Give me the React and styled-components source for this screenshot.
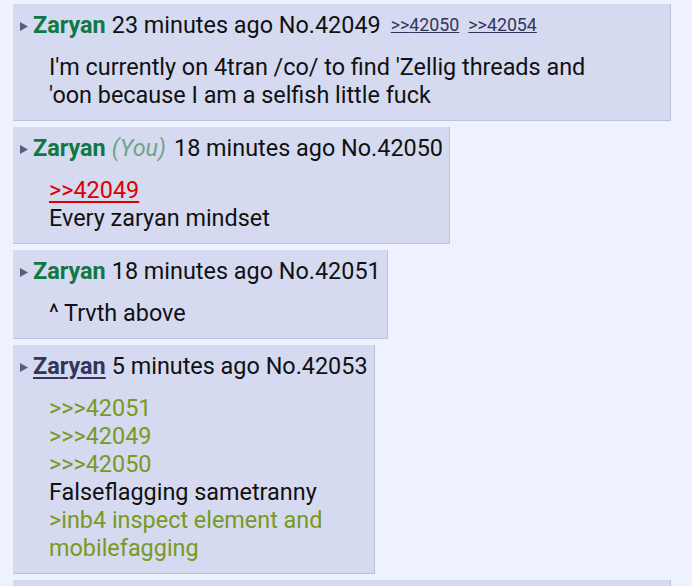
import React from 'react';
import styled, { createGlobalStyle } from 'styled-components';

const GlobalStyle = createGlobalStyle`
  html, body {
    margin: 0;
    padding: 0;
    background: #eef2ff;
  }
  body {
    font-family: Roboto, "Liberation Sans", sans-serif;
    color: #111;
  }
`;

const Thread = styled.div`
  display: flex;
  flex-direction: column;
  align-items: flex-start;
  padding: 4px 21px 0 13px;
  height: 586px;
  box-sizing: border-box;
  overflow: hidden;
`;

const Post = styled.div`
  display: table;
  box-sizing: border-box;
  max-width: 100%;
  width: ${p => (p.$loading ? '100%' : 'auto')};
  min-height: ${p => (p.$loading ? '60px' : '0')};
  flex-shrink: 0;
  background: #d6daf0;
  border-right: 1px solid #b7c5d9;
  border-bottom: 1px solid #b7c5d9;
  padding: 7px 5px 0 7px;
  margin-bottom: 6px;
`;

const PostInfo = styled.div`
  display: flex;
  align-items: center;
  white-space: nowrap;
  font-size: 23.4px;
  line-height: 28px;
`;

const MenuArrow = styled.svg`
  width: 8px;
  height: 9px;
  margin: 3px 5px 0 0;
  flex-shrink: 0;
`;

const Name = styled.span`
  font-weight: 700;
  color: ${p => (p.$link ? '#34345c' : '#117743')};
  text-decoration: ${p => (p.$link ? 'underline' : 'none')};
  text-underline-offset: 3px;
  margin-right: 6px;
`;

const You = styled.span`
  font-style: italic;
  color: #6ea588;
  margin-right: 8px;
`;

const Meta = styled.span`
  margin-right: 1px;
`;

const Backlink = styled.a`
  font-size: 17.8px;
  color: #34345c;
  text-decoration: underline;
  margin-left: 9px;
  cursor: pointer;
`;

const Body = styled.blockquote`
  margin: 14px 40px 11px 29px;
  font-size: 23.4px;
  line-height: 28px;
`;

const QuoteLink = styled.a`
  color: #dd0000;
  text-decoration: underline;
  text-underline-offset: 3px;
`;

const Greentext = styled.span`
  color: #789922;
`;

const Arrow = () => (
  <MenuArrow viewBox="0 0 8 9">
    <path d="M0 0 L8 4.5 L0 9 Z" fill="#5b5b80" />
  </MenuArrow>
);

const PostHeader = ({ name, you, link, ago, no, backlinks = [] }) => (
  <PostInfo>
    <Arrow />
    <Name $link={link}>{name}</Name>
    {you && <You>(You)</You>}
    <Meta>{ago} No.{no}</Meta>
    {backlinks.map(b => (
      <Backlink key={b}>&gt;&gt;{b}</Backlink>
    ))}
  </PostInfo>
);

export default function App() {
  return (
    <>
      <GlobalStyle />
      <Thread>
        <Post>
          <PostHeader name="Zaryan" ago="23 minutes ago" no="42049" backlinks={['42050', '42054']} />
          <Body>
            I'm currently on 4tran /co/ to find 'Zellig threads and 'oon because I am a selfish little fuck
          </Body>
        </Post>

        <Post>
          <PostHeader name="Zaryan" you ago="18 minutes ago" no="42050" />
          <Body>
            <QuoteLink>&gt;&gt;42049</QuoteLink>
            <br />
            Every zaryan mindset
          </Body>
        </Post>

        <Post>
          <PostHeader name="Zaryan" ago="18 minutes ago" no="42051" />
          <Body>^ Trvth above</Body>
        </Post>

        <Post>
          <PostHeader name="Zaryan" link ago="5 minutes ago" no="42053" />
          <Body>
            <Greentext>&gt;&gt;&gt;42051</Greentext>
            <br />
            <Greentext>&gt;&gt;&gt;42049</Greentext>
            <br />
            <Greentext>&gt;&gt;&gt;42050</Greentext>
            <br />
            Falseflagging sametranny
            <br />
            <Greentext>
              &gt;inb4 inspect element and
              <br />
              mobilefagging
            </Greentext>
          </Body>
        </Post>

        <Post $loading />
      </Thread>
    </>
  );
}
